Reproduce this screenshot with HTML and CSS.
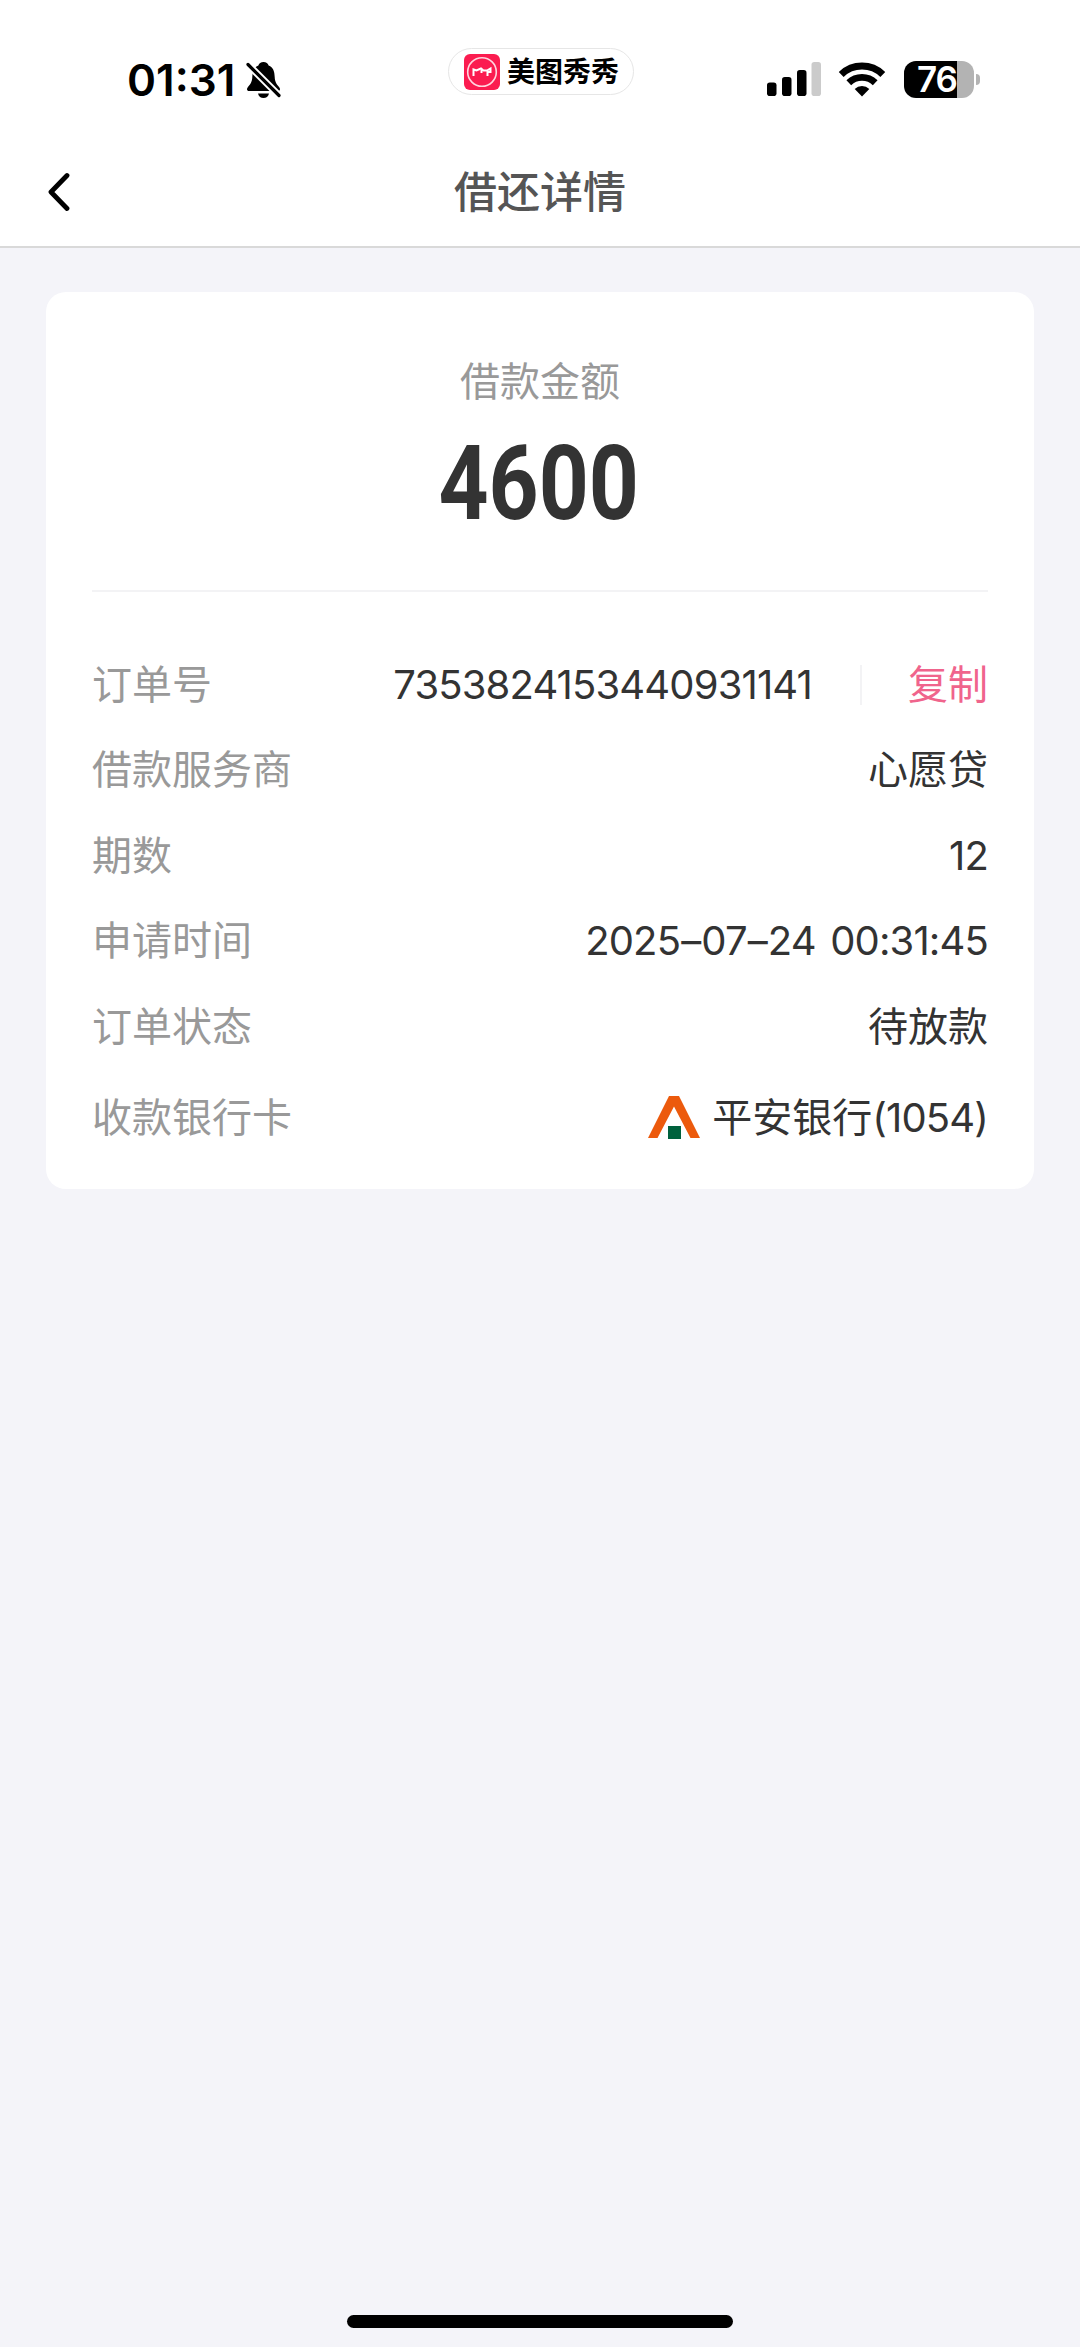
FILE: index.html
```html
<!DOCTYPE html>
<html lang="zh-CN">
<head>
<meta charset="UTF-8">
<meta name="viewport" content="width=device-width, initial-scale=1.0">
<title>借还详情</title>
<link rel="stylesheet" href="styles.css">
</head>
<body>
<header>
  <div class="status-bar">
    <div class="status-left">
      <span class="time">01:31</span>
      <svg class="bell" width="35" height="38" viewBox="0 0 35 38">
        <path d="M17.5 1C14.8 1 13 2.400 12.400 4.500C7.700 6.200 6.500 10.500 6.300 16C6.100 21 4.500 23 1.800 26.200C.3 28 1 30 3.200 30H31.800C34 30 34.700 28 33.200 26.200C30.500 23 28.900 21 28.700 16C28.500 10.500 27.300 6.200 22.600 4.500C22 2.400 20.200 1 17.500 1Z"/>
        <path d="M12 32.500H23C22.300 35.500 20.200 37 17.500 37S12.700 35.500 12 32.500Z"/>
        <path d="M2 3.500L33 34.500" stroke="#fff" stroke-width="7"/>
        <path d="M2 3.500L33 34.500" stroke="#000" stroke-width="3.200" stroke-linecap="round"/>
      </svg>
    </div>
    <div class="pill">
      <svg width="36" height="36" viewBox="0 0 36 36">
        <rect width="36" height="36" rx="6" fill="#fb1c50"/>
        <circle cx="18" cy="18" r="14.300" fill="none" stroke="#ffd5df" stroke-width="1.600"/>
        <path d="M9.500 22V15.500L12.500 16.500L17 14.500L19.500 16.500H23L26.500 14.500V18H23.500V22M17.500 16V19" fill="none" stroke="#fff" stroke-width="2"/>
      </svg>
      <span>美图秀秀</span>
    </div>
    <div class="status-right">
      <svg class="signal" width="54" height="34" viewBox="0 0 54 34">
        <rect x="0" y="20.500" width="9.500" height="13.500" rx="2.800"/>
        <rect x="15" y="15" width="9.500" height="19" rx="2.800"/>
        <rect x="30" y="8" width="9.500" height="26" rx="2.800"/>
        <rect x="44.500" y="0" width="9.500" height="34" rx="2.800" fill="#cbcbcb"/>
      </svg>
      <svg class="wifi" width="48" height="35" viewBox="0 0 48 35">
        <path d="M3.200 12.500A30 30 0 0 1 44.800 12.500" fill="none" stroke="#000" stroke-width="7"/>
        <path d="M10.800 20.700A19 19 0 0 1 37.200 20.700" fill="none" stroke="#000" stroke-width="6.800"/>
        <path d="M16.700 27A10.500 10.500 0 0 1 31.300 27L24 34.500Z"/>
      </svg>
      <div class="battery"><span>76</span></div>
      <div class="battery-tip"></div>
    </div>
  </div>
  <div class="nav">
    <svg class="back" width="24" height="40" viewBox="0 0 24 40">
      <path d="M21 3.500L5 20L21 36.500" fill="none" stroke="#000" stroke-width="4.800" stroke-linecap="round" stroke-linejoin="round"/>
    </svg>
    <h1>借还详情</h1>
  </div>
</header>

<main class="card">
  <div class="amount">
    <p class="amount-label">借款金额</p>
    <p class="amount-value">4600</p>
  </div>
  <div class="rows">
    <div class="row">
      <span class="label">订单号</span>
      <span class="value"><span class="num">7353824153440931141</span><span class="copy">复制</span></span>
    </div>
    <div class="row">
      <span class="label">借款服务商</span>
      <span class="value">心愿贷</span>
    </div>
    <div class="row">
      <span class="label">期数</span>
      <span class="value num">12</span>
    </div>
    <div class="row">
      <span class="label">申请时间</span>
      <span class="value"><span class="num date">2025<span class="dash">–</span>07<span class="dash">–</span>24 00:31:45</span></span>
    </div>
    <div class="row">
      <span class="label">订单状态</span>
      <span class="value">待放款</span>
    </div>
    <div class="row bank-row">
      <span class="label">收款银行卡</span>
      <span class="value">
        <svg class="bank-logo" width="52" height="44" viewBox="0 0 52 44">
          <path d="M0 42L21 0H31L52 42H42.500L26 10.500L9.500 42Z" fill="#ec5a0c"/>
          <rect x="20" y="30" width="13" height="13" fill="#00613d"/>
        </svg>
        <span>平安银行<span class="num">(1054)</span></span>
      </span>
    </div>
  </div>
</main>
<div class="home-bar"></div>
</body>
</html>
```

FILE: styles.css
```css
* {
  box-sizing: border-box;
}
body {
  margin: 0;
  height: 2347px;
  display: flex;
  flex-direction: column;
  background-color: #f4f4f9;
  color: #333;
  font-family: Inter, "Noto Sans CJK SC", sans-serif;
}
header {
  height: 248px;
  background-color: #fff;
  border-bottom: 2px solid #d9d9d9;
}
.status-bar {
  height: 144px;
  padding: 0 100px 0 127px;
  display: grid;
  grid-template-columns: 321px 186px 1fr;
  color: #000;
}
.status-left {
  display: flex;
  align-items: center;
  height: 160px;
}
.time {
  font-size: 44px;
  font-weight: 600;
}
.bell {
  margin-left: 11px;
}
.pill {
  display: flex;
  align-items: center;
  margin-top: 48px;
  height: 47px;
  padding-left: 15px;
  border: 1px solid #e6e6e6;
  border-radius: 24px;
}
.pill span {
  margin-left: 7px;
  font-size: 28px;
  font-weight: 700;
  line-height: 40px;
}
.status-right {
  display: flex;
  align-items: center;
  height: 158px;
  justify-content: flex-end;
}
.wifi {
  margin-left: 17px;
}
.battery {
  width: 70px;
  height: 37px;
  margin-left: 18px;
  border-radius: 12px;
  background: linear-gradient(to right, #000 53px, #b3b3b3 53px);
  color: #fff;
  font-size: 35px;
  font-weight: 600;
  line-height: 37px;
  padding-left: 13px;
  letter-spacing: -1px;
}
.battery-tip {
  width: 4px;
  height: 11px;
  margin-left: 2px;
  border-radius: 0 4px 4px 0;
  background-color: #b3b3b3;
}
.nav {
  display: grid;
  grid-template-columns: 80px 1fr 80px;
  align-items: center;
  height: 96px;
}
.back {
  margin-left: 46px;
}
h1 {
  margin: 0;
  font-size: 43px;
  font-weight: 500;
  line-height: 60px;
  text-align: center;
  color: #555;
}
.card {
  width: 988px;
  height: 897px;
  margin: 44px auto 0;
  padding: 0 46px;
  border-radius: 20px;
  background-color: #fff;
}
.amount {
  height: 300px;
  padding-top: 60px;
  border-bottom: 2px solid #f3f3f5;
  text-align: center;
}
.amount p {
  margin: 0;
}
.amount-label {
  font-size: 40px;
  line-height: 60px;
  color: #999;
}
.amount-value {
  padding: 12px 3px 0 0;
  font-family: Roboto, sans-serif;
  font-size: 104px;
  font-weight: 700;
  line-height: 120px;
  transform: scaleX(0.84);
}
.rows {
  padding-top: 50px;
  font-size: 40px;
  line-height: 60px;
}
.row {
  display: flex;
  align-items: center;
  justify-content: space-between;
  height: 85.5px;
}
.label {
  color: #999;
}
.value {
  display: flex;
  align-items: center;
}
.num {
  letter-spacing: -0.85px;
}
.date {
  word-spacing: 4px;
}
.dash {
  margin: 0 1px;
}
.copy {
  margin-left: 48px;
  padding-left: 46px;
  border-left: 2px solid #f3f3f5;
  line-height: 40px;
  color: #f0648c;
}
.bank-row {
  height: 96px;
}
.bank-logo {
  margin-right: 12px;
}
.home-bar {
  width: 386px;
  height: 13px;
  margin: auto auto 19px;
  border-radius: 7px;
  background-color: #000;
}
```
